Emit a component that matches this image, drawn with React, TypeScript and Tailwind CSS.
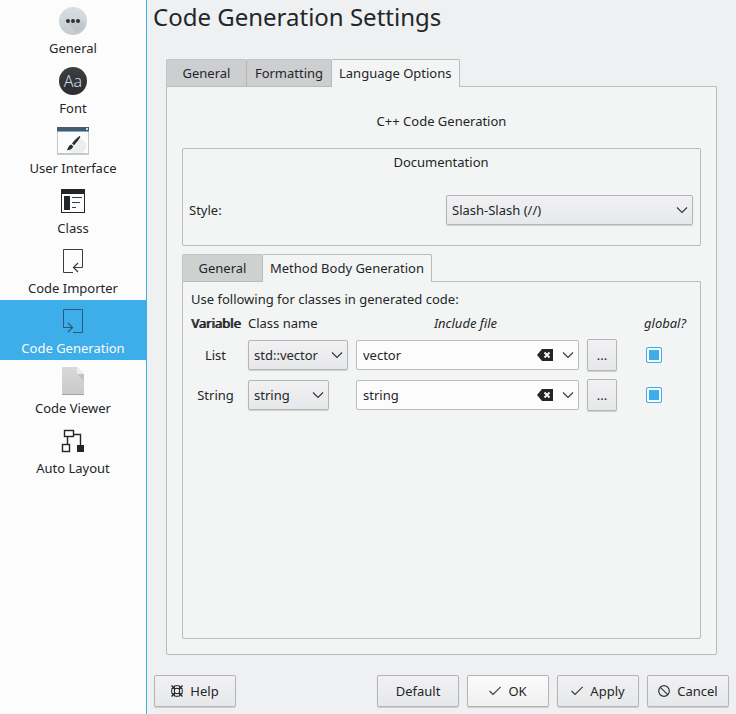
import React, { useState } from "react";

function GeneralIcon() {
  return (
    <svg width="32" height="32" viewBox="0 0 32 32" aria-hidden="true">
      <defs>
        <linearGradient id="general-bg" x1="0" y1="1" x2="0" y2="0">
          <stop offset="0" stopColor="#c3cbd0" />
          <stop offset="1" stopColor="#d9dee0" />
        </linearGradient>
      </defs>
      <circle cx="16" cy="16" r="14" fill="url(#general-bg)" />
      <path d="M10 17.5 L19 27.5 C24 26.5 28 23 29 19 L22.5 14.5 Z" fill="#a9b2b7" opacity="0.3" />
      <circle cx="11" cy="16" r="2" fill="#2d3136" />
      <circle cx="16" cy="16" r="2" fill="#2d3136" />
      <circle cx="21" cy="16" r="2" fill="#2d3136" />
    </svg>
  );
}

function FontIcon() {
  return (
    <span className="flex h-7 w-7 items-center justify-center rounded-full bg-linear-to-t from-[#2a2c2f] to-[#3c4044] text-base leading-none font-light text-[#d5d8da]">
      Aa
    </span>
  );
}

function InterfaceIcon() {
  return (
    <svg width="32" height="32" viewBox="0 0 32 32" aria-hidden="true">
      <rect x="0" y="2" width="32" height="28" fill="#c3cacc" />
      <rect x="1" y="7" width="30" height="21" fill="#fcfcfc" />
      <rect x="0" y="2" width="32" height="4" fill="#4d5b66" />
      <rect x="0" y="6" width="32" height="1" fill="#5fb4e8" />
      <rect x="29" y="3" width="2" height="2" fill="#d5dadd" />
      <path d="M11 25 L23 12 L29 18 V24 L25 28 H14 Z" fill="#dcdfe0" opacity="0.45" />
      <path d="M15 18.5 C17 15.5 20.5 12.2 22.2 11.2 C23.2 10.8 23.5 11.3 23 12.2 C21.6 15 19 18.3 17 20.2 Z" fill="#2b2f33" />
      <path d="M14.3 19.4 L16.2 21.2 C15.6 23.6 13 25.2 9.5 25.3 C11.3 23.8 10.8 20.6 14.3 19.4 Z" fill="#2b2f33" />
    </svg>
  );
}

function ClassIcon() {
  return (
    <svg width="32" height="32" viewBox="0 0 32 32" aria-hidden="true" shapeRendering="crispEdges">
      <rect x="4" y="4" width="24" height="24" fill="#232629" />
      <rect x="5" y="9" width="22" height="18" fill="#fcfcfc" />
      <rect x="7" y="11" width="6" height="14" fill="#232629" />
      <path d="M15 12.5 H25 M15 17.5 H23 M15 22.5 H19" stroke="#3b3e41" strokeWidth="1" />
    </svg>
  );
}

function ImporterIcon() {
  return (
    <svg width="32" height="32" viewBox="0 0 32 32" aria-hidden="true" fill="none" stroke="#3a3d40">
      <path d="M16 27.5 H6.5 V4.5 H25.5 V22.5 H17" />
      <path d="M21 18 L16.5 22.5 L21 27" strokeWidth="1.2" />
    </svg>
  );
}

function GenerationIcon() {
  return (
    <svg width="32" height="32" viewBox="0 0 32 32" aria-hidden="true" fill="none" stroke="#295a7b">
      <path d="M16 27.5 H25.5 V4.5 H6.5 V22.5 H15" />
      <path d="M11 18 L15.5 22.5 L11 27" strokeWidth="1.2" />
    </svg>
  );
}

function ViewerIcon() {
  return (
    <svg width="32" height="32" viewBox="0 0 32 32" aria-hidden="true">
      <defs>
        <linearGradient id="viewer-bg" x1="0" y1="1" x2="0" y2="0">
          <stop offset="0" stopColor="#c9c9c9" />
          <stop offset="1" stopColor="#d9d9d9" />
        </linearGradient>
      </defs>
      <path d="M5 2 H20 L27 9 V30 H5 Z" fill="url(#viewer-bg)" />
      <path d="M20 9 L27 16 V9 Z" fill="#b5b5b5" opacity="0.6" />
      <path d="M20 2 L27 9 H20 Z" fill="#ececec" />
      <rect x="5" y="29" width="22" height="1" fill="#a5a5a5" />
    </svg>
  );
}

function LayoutIcon() {
  return (
    <svg width="32" height="32" viewBox="0 0 32 32" aria-hidden="true" fill="none" stroke="#232629">
      <rect x="7.5" y="5.5" width="9" height="6" strokeWidth="1.4" />
      <rect x="5.5" y="19.5" width="7" height="7" strokeWidth="1.4" />
      <rect x="20" y="20" width="7" height="7" fill="#232629" stroke="none" />
      <path d="M10.5 12 V19 M17 9.5 H23.5 V20" strokeWidth="1.4" />
    </svg>
  );
}

function Chevron() {
  return (
    <svg width="12" height="8" viewBox="0 0 12 8" aria-hidden="true" fill="none" stroke="#31363b" strokeWidth="1.1">
      <path d="M1 1.5 L6 6.5 L11 1.5" />
    </svg>
  );
}

function HelpIcon() {
  return (
    <svg width="12" height="12" viewBox="0 0 12 12" aria-hidden="true" fill="none" stroke="#232629">
      <circle cx="6" cy="6" r="5.4" />
      <circle cx="6" cy="6" r="2.8" />
      <path d="M0.5 3.5 H11.5 M0.5 8.5 H11.5 M3.5 0.5 V11.5 M8.5 0.5 V11.5" strokeWidth="0.8" />
      <path d="M0.5 0.5 L3.5 3.5 M11.5 0.5 L8.5 3.5 M0.5 11.5 L3.5 8.5 M11.5 11.5 L8.5 8.5" strokeWidth="1.4" />
    </svg>
  );
}

function CheckIcon() {
  return (
    <svg width="12" height="12" viewBox="0 0 12 12" aria-hidden="true" fill="none" stroke="#31363b" strokeWidth="1.1">
      <path d="M0.5 6 L4 9.5 L11.7 1.8" />
    </svg>
  );
}

function CancelIcon() {
  return (
    <svg width="12" height="12" viewBox="0 0 12 12" aria-hidden="true" fill="none" stroke="#31363b" strokeWidth="1.2">
      <circle cx="6" cy="6" r="5.3" />
      <path d="M2.3 2.3 L9.7 9.7" />
    </svg>
  );
}

function ClearIcon() {
  return (
    <svg width="16" height="12" viewBox="0 0 16 12" aria-hidden="true">
      <path d="M0 6 L5 0 H16 V12 H5 Z" fill="#232629" />
      <path d="M7.5 3.5 L12.5 8.5 M12.5 3.5 L7.5 8.5" stroke="#fcfcfc" strokeWidth="1.8" />
    </svg>
  );
}

const pages = [
  { name: "General", icon: <GeneralIcon /> },
  { name: "Font", icon: <FontIcon /> },
  { name: "User Interface", icon: <InterfaceIcon /> },
  { name: "Class", icon: <ClassIcon /> },
  { name: "Code Importer", icon: <ImporterIcon /> },
  { name: "Code Generation", icon: <GenerationIcon /> },
  { name: "Code Viewer", icon: <ViewerIcon /> },
  { name: "Auto Layout", icon: <LayoutIcon /> },
];

const raised =
  "rounded-xs border border-[#b3b5b6] bg-linear-to-b from-[#f1f1f3] to-[#e7e8ea] shadow-[0_1px_1px_rgba(0,0,0,0.15)]";

function Tab({ label, active, className }: { label: string; active?: boolean; className?: string }) {
  return (
    <button
      type="button"
      role="tab"
      aria-selected={!!active}
      className={
        active
          ? "relative h-7 rounded-t-xs border border-b-0 border-[#babcbc] bg-[#f3f5f4] px-[7px] pb-0.5"
          : "h-[27px] rounded-tl-xs border-t border-t-[#c3c5c6] border-l " + (className ?? "")
      }
    >
      {label}
    </button>
  );
}

function Combo({ id, label, value, className }: { id: string; label: string; value: string; className: string }) {
  return (
    <div className={"relative " + className}>
      <select
        id={id}
        aria-label={label}
        defaultValue={value}
        className={"block h-[30px] w-full appearance-none pr-6 pl-[5px] " + raised}
      >
        <option>{value}</option>
      </select>
      <span className="pointer-events-none absolute inset-y-0 right-[5px] flex items-center">
        <Chevron />
      </span>
    </div>
  );
}

function ClassRow({ name, type, file, comboWidth }: { name: string; type: string; file: string; comboWidth: string }) {
  const [text, setText] = useState(file);
  const id = name.toLowerCase();
  return (
    <tr className="h-10">
      <th scope="row" className="pr-2 text-center font-normal">
        {name}
      </th>
      <td>
        <Combo id={id + "-class"} label={name + " class name"} value={type} className={comboWidth} />
      </td>
      <td className="pr-2">
        <div className="flex h-[30px] items-center gap-[9px] rounded-xs border border-[#babcbc] bg-[#fcfcfc] pr-1 pl-1.5">
          <input
            type="text"
            aria-label={name + " include file"}
            value={text}
            onChange={(e) => setText(e.target.value)}
            className="min-w-0 flex-1 bg-transparent outline-none"
          />
          <button type="button" aria-label="Clear" onClick={() => setText("")}>
            <ClearIcon />
          </button>
          <button type="button" aria-label="Show files">
            <Chevron />
          </button>
        </div>
      </td>
      <td>
        <button type="button" aria-label="Browse" className={"block h-8 w-[30px] " + raised}>
          ...
        </button>
      </td>
      <td className="pl-[29px]">
        <input
          type="checkbox"
          defaultChecked
          aria-label={name + " global"}
          className="block h-4 w-4 appearance-none rounded-xs border border-[#3daee9] bg-[#fcfcfc] shadow-[inset_0_0_0_2px_#fcfcfc] checked:bg-[#3daee9]"
        />
      </td>
    </tr>
  );
}

function DialogButton({ label, icon, primary }: { label: string; icon?: React.ReactNode; primary?: boolean }) {
  return (
    <button
      type="button"
      className={
        "flex h-8 w-[82px] items-center justify-center gap-[7px] " +
        (primary
          ? "rounded-xs border border-[#b3b5b6] bg-linear-to-b from-[#fcfcfc] to-[#f0f0f1] shadow-[0_1px_1px_rgba(0,0,0,0.15)]"
          : raised)
      }
    >
      {icon}
      {label}
    </button>
  );
}

export default function App() {
  const [page, setPage] = useState("Code Generation");
  return (
    <div className="flex min-h-screen bg-[#eff0f1] font-['Noto_Sans',sans-serif] text-[13px] leading-[18px] text-[#232629]">
      <nav className="w-[147px] shrink-0 border-r border-[#3daee9] bg-[#fcfcfc]">
        {pages.map((p) => (
          <button
            key={p.name}
            type="button"
            onClick={() => setPage(p.name)}
            className={
              "flex h-15 w-full flex-col items-center gap-0.5 pt-[5px] " +
              (p.name === page ? "bg-[#3daee9] text-[#fcfcfc]" : "")
            }
          >
            <span className="flex h-8 w-8 items-center justify-center">{p.icon}</span>
            <span>{p.name}</span>
          </button>
        ))}
      </nav>

      <main className="flex min-w-0 flex-1 flex-col pb-[7px]">
        <h1 className="px-1.5 text-2xl leading-[33px]">Code Generation Settings</h1>

        <div className="mx-[19px] mt-[26px] flex flex-1 flex-col">
          <div role="tablist" className="-mb-px flex items-start">
            <Tab label="General" className="w-20 border-l-[#c3c5c6] bg-[#cdced0]" />
            <Tab label="Formatting" className="w-[85px] border-l-[#b3b5b6] bg-[#cdced0]" />
            <Tab label="Language Options" active />
          </div>
          <div className="flex flex-1 flex-col rounded-b-xs border border-[#babcbc] bg-[#f3f5f4] px-[15px] pt-[25px] pb-[15px]">
            <h2 className="text-center">C++ Code Generation</h2>

            <section className="mt-[18px] rounded-xs border border-[#babcbc] pt-1 pr-[7px] pb-5 pl-1.5">
              <h3 className="text-center">Documentation</h3>
              <div className="mt-6 grid grid-cols-2 items-center gap-2.5">
                <label htmlFor="style">Style:</label>
                <Combo id="style" label="Style" value="Slash-Slash (//)" className="w-full" />
              </div>
            </section>

            <div role="tablist" className="mt-2 -mb-px flex items-start">
              <Tab label="General" className="w-20 border-l-[#c3c5c6] bg-[#cfd1d0]" />
              <Tab label="Method Body Generation" active />
            </div>
            <div className="flex-1 rounded-b-xs border border-[#babcbc] px-2 pt-2">
              <p>Use following for classes in generated code:</p>
              <table className="mt-[3px] w-full table-fixed text-left">
                <colgroup>
                  <col className="w-[57px]" />
                  <col className="w-[108px]" />
                  <col />
                  <col className="w-[30px]" />
                  <col className="w-[75px]" />
                </colgroup>
                <thead>
                  <tr className="h-6">
                    <th className="font-normal [text-shadow:1px_0_0_currentColor]">Variable</th>
                    <th className="font-normal">Class name</th>
                    <th className="pr-3 text-center font-normal italic">Include file</th>
                    <th />
                    <th className="pl-[27px] font-normal italic">global?</th>
                  </tr>
                </thead>
                <tbody>
                  <ClassRow name="List" type="std::vector" file="vector" comboWidth="w-[100px]" />
                  <ClassRow name="String" type="string" file="string" comboWidth="w-[81px]" />
                </tbody>
              </table>
            </div>
          </div>
        </div>

        <footer className="mt-5 flex flex-wrap gap-2 px-[7px]">
          <DialogButton label="Help" icon={<HelpIcon />} />
          <div className="flex-1" />
          <DialogButton label="Default" />
          <DialogButton label="OK" icon={<CheckIcon />} primary />
          <DialogButton label="Apply" icon={<CheckIcon />} />
          <DialogButton label="Cancel" icon={<CancelIcon />} />
        </footer>
      </main>
    </div>
  );
}
